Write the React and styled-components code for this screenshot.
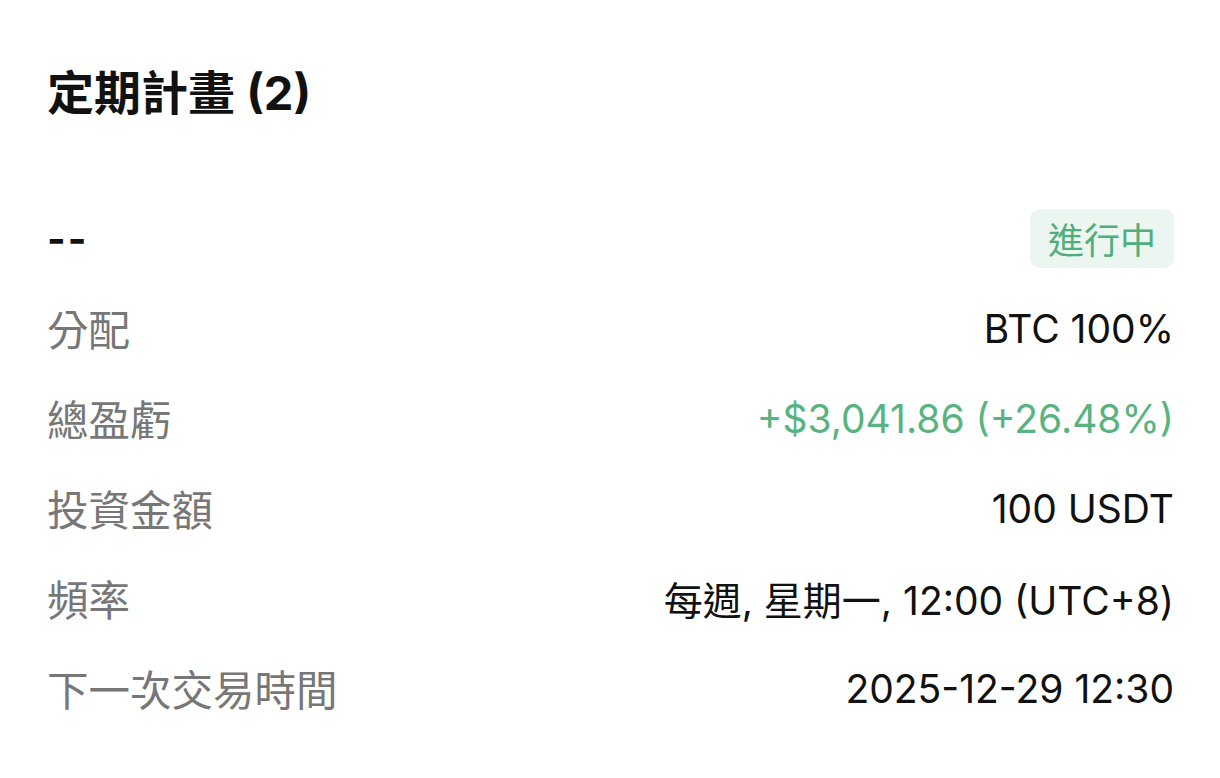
import React from 'react';
import styled, { createGlobalStyle } from 'styled-components';

const Global = createGlobalStyle`
  body { margin: 0; background: #fff; }
  * { box-sizing: border-box; }
`;

const Page = styled.div`
  width: 1220px;
  min-height: 778px;
  padding: 63px 46px 0 47px;
  background: #fff;
  font-family: Inter, "Noto Sans CJK TC", sans-serif;
`;

const Title = styled.h1`
  margin: 0;
  font-family: Inter, "Noto Sans CJK TC", sans-serif;
  font-weight: 700;
  font-size: 47px;
  line-height: 60px;
  color: #111;
`;

const HeaderRow = styled.div`
  margin-top: 70px;
  height: 90px;
  display: flex;
  align-items: center;
  justify-content: space-between;
`;

const Dash = styled.span`
  font-family: Inter, sans-serif;
  font-size: 40px;
  font-weight: 700;
  color: #111;
  letter-spacing: 2px;
`;

const Badge = styled.span`
  height: 59px;
  padding: 0 18px;
  display: inline-flex;
  align-items: center;
  border-radius: 10px;
  background: #eaf6ef;
  color: #4fae7b;
  font-family: "Noto Sans CJK TC", sans-serif;
  font-size: 36px;
`;

const Row = styled.div`
  height: 90px;
  display: flex;
  align-items: center;
  justify-content: space-between;
`;

const Label = styled.span`
  font-family: "Noto Sans CJK TC", sans-serif;
  font-size: 41.5px;
  color: #777;
`;

const Value = styled.span`
  font-family: Inter, "Noto Sans CJK TC", sans-serif;
  font-size: 39px;
  color: ${p => (p.$positive ? '#58b380' : '#111')};
`;

const rows = [
  { label: '分配', value: 'BTC 100%' },
  { label: '總盈虧', value: '+$3,041.86 (+26.48%)', positive: true },
  { label: '投資金額', value: '100 USDT' },
  { label: '頻率', value: '每週, 星期一, 12:00 (UTC+8)' },
  { label: '下一次交易時間', value: '2025-12-29 12:30' },
];

export default function App() {
  return (
    <Page>
      <Global />
      <Title>定期計畫 (2)</Title>
      <HeaderRow>
        <Dash>--</Dash>
        <Badge>進行中</Badge>
      </HeaderRow>
      {rows.map(r => (
        <Row key={r.label}>
          <Label>{r.label}</Label>
          <Value $positive={r.positive}>{r.value}</Value>
        </Row>
      ))}
    </Page>
  );
}
